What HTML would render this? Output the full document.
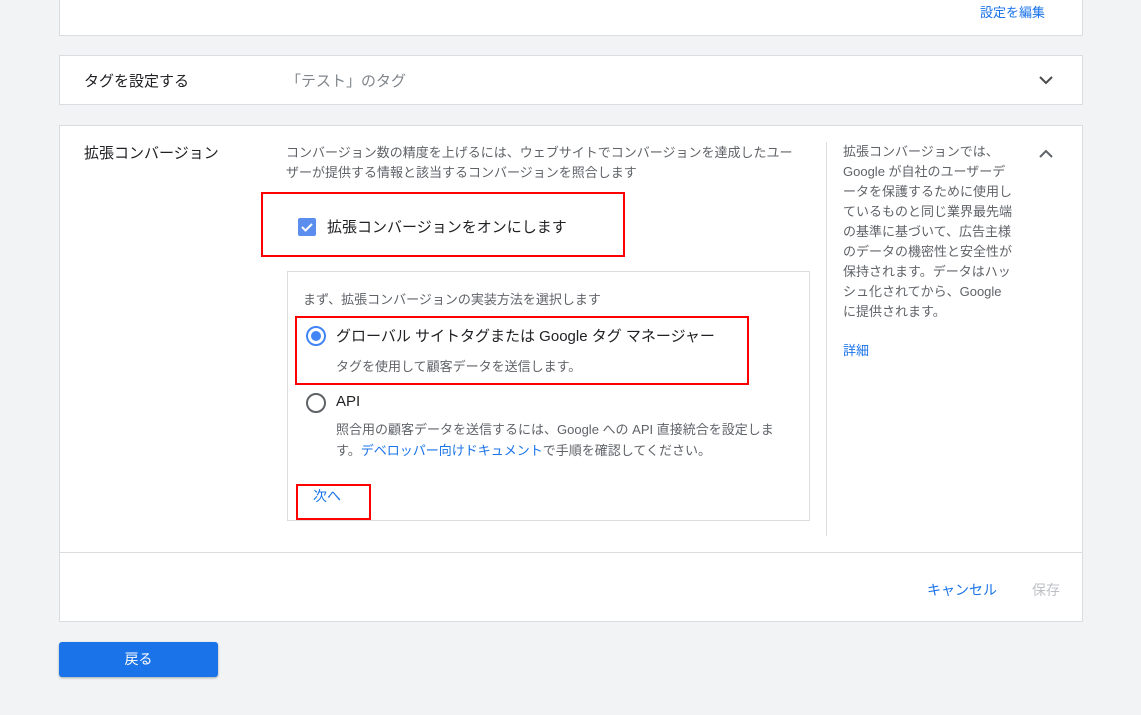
<!DOCTYPE html>
<html><head><meta charset="utf-8"><style>
body{margin:0;width:1141px;height:715px;background:#f1f3f4;font-family:"Liberation Sans","Noto Sans CJK JP",sans-serif;position:relative;overflow:hidden;color:#3c4043}
.a{position:absolute;white-space:nowrap}
.card{position:absolute;left:59px;width:1022px;background:#fff;border:1px solid #dadce0}
.red{position:absolute;border:2px solid #f00;box-sizing:border-box}
.g{color:#5f6368;font-size:13px}
.b{color:#1a73e8}
</style></head><body>
<div class="card" style="top:-1px;height:35px"></div>
<div class="a b" style="left:980px;top:2px;font-size:13px">設定を編集</div>

<div class="card" style="top:55px;height:48px"></div>
<div class="a" style="left:84px;top:70px;font-size:15px;color:#202124">タグを設定する</div>
<div class="a" style="left:286px;top:70px;font-size:15px;color:#80868b">「テスト」のタグ</div>
<svg class="a" style="left:1038px;top:74px" width="16" height="12"><path d="M2 3l6 6 6-6" fill="none" stroke="#4a4a4a" stroke-width="2"/></svg>

<div class="card" style="top:125px;height:495px"></div>
<div class="a" style="left:60px;top:552px;width:1022px;height:1px;background:#dadce0"></div>
<div class="a" style="left:84px;top:142px;font-size:15px;color:#202124">拡張コンバージョン</div>
<div class="a g" style="left:286px;top:143px;line-height:20px">コンバージョン数の精度を上げるには、ウェブサイトでコンバージョンを達成したユー<br>ザーが提供する情報と該当するコンバージョンを照合します</div>
<div class="red" style="left:261px;top:192px;width:364px;height:65px"></div>
<div class="a" style="left:298px;top:218px;width:18px;height:18px;background:#5b8def;border-radius:2px"><svg width="18" height="18"><path d="M4 9l3.5 3.5L14 6" fill="none" stroke="#fff" stroke-width="2"/></svg></div>
<div class="a" style="left:327px;top:216px;font-size:15px;color:#202124">拡張コンバージョンをオンにします</div>

<div class="a" style="left:287px;top:271px;width:521px;height:248px;border:1px solid #dadce0"></div>
<div class="a g" style="left:303px;top:289px">まず、拡張コンバージョンの実装方法を選択します</div>
<div class="red" style="left:295px;top:316px;width:454px;height:69px"></div>
<svg class="a" style="left:305px;top:325px" width="22" height="22"><circle cx="11" cy="11" r="9" fill="none" stroke="#4285f4" stroke-width="2"/><circle cx="11" cy="11" r="5" fill="#4285f4"/></svg>
<div class="a" style="left:336px;top:325px;font-size:15px;color:#202124">グローバル サイトタグまたは Google タグ マネージャー</div>
<div class="a g" style="left:336px;top:356px">タグを使用して顧客データを送信します。</div>
<svg class="a" style="left:305px;top:392px" width="22" height="22"><circle cx="11" cy="11" r="9" fill="none" stroke="#5f6368" stroke-width="2"/></svg>
<div class="a" style="left:336px;top:393px;font-size:15px;color:#202124">API</div>
<div class="a g" style="left:336px;top:419px;line-height:21px">照合用の顧客データを送信するには、Google への API 直接統合を設定しま<br>す。<span class="b">デベロッパー向けドキュメント</span>で手順を確認してください。</div>
<div class="red" style="left:296px;top:484px;width:75px;height:36px"></div>
<div class="a b" style="left:313px;top:486px;font-size:14px">次へ</div>

<div class="a" style="left:826px;top:142px;width:1px;height:394px;background:#dadce0"></div>
<div class="a g" style="left:843px;top:142px;line-height:20px;font-size:13px">拡張コンバージョンでは、<br>Google が自社のユーザーデ<br>ータを保護するために使用し<br>ているものと同じ業界最先端<br>の基準に基づいて、広告主様<br>のデータの機密性と安全性が<br>保持されます。データはハッ<br>シュ化されてから、Google<br>に提供されます。</div>
<div class="a b" style="left:843px;top:340px;font-size:13px">詳細</div>
<svg class="a" style="left:1038px;top:148px" width="16" height="12"><path d="M2 9l6-6 6 6" fill="none" stroke="#5f6368" stroke-width="2"/></svg>

<div class="a b" style="left:927px;top:580px;font-size:14px">キャンセル</div>
<div class="a" style="left:1032px;top:580px;font-size:14px;color:#bdc1c6">保存</div>

<div class="a" style="left:59px;top:642px;width:159px;height:35px;background:#1a73e8;border-radius:3px;box-shadow:0 1px 2px rgba(0,0,0,.3);color:#fff;font-size:14px;text-align:center;line-height:35px">戻る</div>
</body></html>
